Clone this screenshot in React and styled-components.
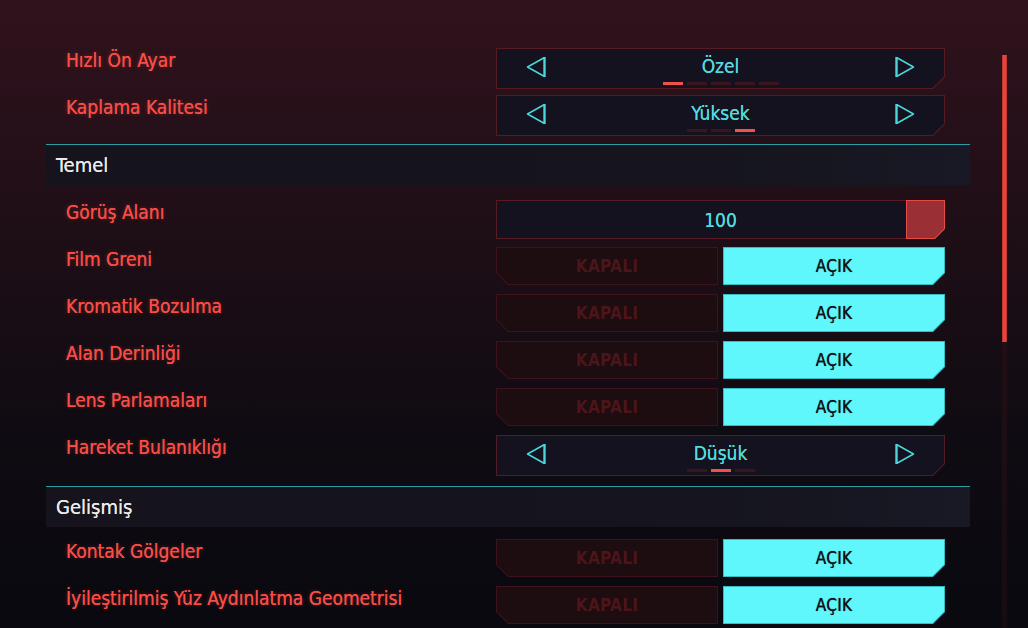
import React from 'react';
import styled, { createGlobalStyle } from 'styled-components';

const GlobalStyle = createGlobalStyle`
    html, body {
        margin: 0;
        padding: 0;
        height: 100%;
        overflow: hidden;
        background: #0a0a10;
    }
    * {
        box-sizing: border-box;
    }
`;

const FONT = `"DejaVu Sans Condensed", "Liberation Sans Narrow", "DejaVu Sans", sans-serif`;

const Page = styled.div`
    display: flex;
    align-items: flex-start;
    height: 628px;
    padding-top: 48px;
    font-family: ${FONT};
    background: linear-gradient(180deg, #30121c 0%, #1d0e16 40%, #0f0b12 70%, #09090f 100%);
`;

const Content = styled.div`
    width: 924px;
    margin-left: 46px;
    display: flex;
    flex-direction: column;
`;

const Row = styled.div`
    display: flex;
    align-items: flex-start;
    height: 41px;
    margin-bottom: 6px;
    padding: 0 25px 0 20px;
`;

const Label = styled.div`
    flex: 1;
    color: #f84c46;
    font-size: 19px;
    line-height: 24px;
    white-space: nowrap;
    text-shadow: 0 0 0.6px #f84c46, 0 0 4px rgba(248, 76, 70, 0.35);
`;

const Control = styled.div`
    width: 449px;
    height: 100%;
    position: relative;
`;

/* chamfered frame: outer paints the border, inner paints the fill */
const clip = (corner, size) =>
    corner === 'bl'
        ? `polygon(0 0, 100% 0, 100% 100%, ${size} 100%, 0 calc(100% - ${size}))`
        : `polygon(0 0, 100% 0, 100% calc(100% - ${size}), calc(100% - ${size}) 100%, 0 100%)`;

const Frame = styled.div`
    height: ${p => p.$h || '100%'};
    padding: 1px;
    background: ${p => p.$border};
    clip-path: ${p => clip(p.$corner, p.$cut || '12px')};
`;

const Face = styled.div`
    height: 100%;
    background: ${p => p.$fill};
    clip-path: ${p => clip(p.$corner, p.$innerCut || '11.5px')};
    display: flex;
    align-items: ${p => p.$align || 'center'};
    justify-content: center;
    position: relative;
`;

const Arrow = styled.svg`
    width: 20px;
    height: 22px;
    margin-top: 7px;
    flex: none;
`;

const Center = styled.div`
    flex: 1;
    display: flex;
    flex-direction: column;
    align-items: center;
    padding-top: 6px;
`;

const Value = styled.div`
    color: #52dade;
    font-size: 19px;
    line-height: 22px;
    text-shadow: 0 0 0.6px #52dade;
`;

const Dashes = styled.div`
    display: flex;
    gap: 4px;
    margin-top: 5px;
`;

const Dash = styled.div`
    width: 20px;
    height: 3px;
    background: ${p => (p.$on ? '#f0514b' : '#3a151c')};
`;

const SelectFace = styled(Face)`
    padding: 0 29px;
`;

const SliderText = styled.div`
    color: #52dade;
    font-size: 19px;
    line-height: 22px;
    text-shadow: 0 0 0.6px #52dade;
`;

const Thumb = styled.div`
    position: absolute;
    top: 0;
    right: 0;
    width: 39px;
    height: 39px;
    padding: 1px;
    background: #e44b45;
    clip-path: ${clip('br', '10px')};
    & > div {
        height: 100%;
        background: #9a3036;
        clip-path: ${clip('br', '9.5px')};
    }
`;

const ToggleGrid = styled.div`
    display: grid;
    grid-template-columns: 1fr 1fr;
    gap: 5px;
    height: 38px;
`;

const ToggleText = styled.div`
    font-size: 17px;
    font-weight: ${p => (p.$on ? 500 : 700)};
    color: ${p => (p.$on ? '#0f1218' : '#4b1519')};
    letter-spacing: 0.3px;
    text-shadow: ${p => (p.$on ? '0 0 0.7px #0f1218' : 'none')};
`;

const Divider = styled.div`
    height: 1px;
    background: #2c9ea3;
    margin-top: ${p => p.$top}px;
`;

const SectionHead = styled.div`
    height: 40px;
    background: linear-gradient(90deg, #16131d 0%, #15141f 70%, #181924 100%);
    color: #ecebea;
    font-size: 20px;
    line-height: 40px;
    padding-left: 10px;
    text-shadow: 0 0 0.6px #ecebea;
    margin-bottom: ${p => p.$bottom}px;
`;

const ScrollTrack = styled.div`
    margin-left: 32px;
    margin-top: 7px;
    width: 5px;
    height: 580px;
    background: linear-gradient(180deg, #2a1218 0%, #150c12 100%);
`;

const ScrollThumb = styled.div`
    height: 287px;
    background: #e8433c;
    box-shadow: inset 1px 0 0 #c2372f, inset -1px 0 0 #c2372f;
`;

function LeftArrow() {
    return (
        <Arrow viewBox="0 0 20 22">
            <path d="M18.5 1.5 L1.5 11 L18.5 20.5" fill="none" stroke="#4ad6db" strokeWidth="1.5" strokeLinejoin="round" />
            <path d="M18.5 1 V21" stroke="#4ad6db" strokeWidth="2.4" />
        </Arrow>
    );
}

function RightArrow() {
    return (
        <Arrow viewBox="0 0 20 22">
            <path d="M1.5 1.5 L18.5 11 L1.5 20.5" fill="none" stroke="#4ad6db" strokeWidth="1.5" strokeLinejoin="round" />
            <path d="M1.5 1 V21" stroke="#4ad6db" strokeWidth="2.4" />
        </Arrow>
    );
}

function Select({ label, value, count, active }) {
    return (
        <Row>
            <Label>{label}</Label>
            <Control>
                <Frame $border="#561a23" $corner="br">
                    <SelectFace $fill="#13121e" $corner="br" $align="flex-start">
                        <LeftArrow />
                        <Center>
                            <Value>{value}</Value>
                            <Dashes>
                                {Array.from({ length: count }).map((_, i) => (
                                    <Dash key={i} $on={i === active} />
                                ))}
                            </Dashes>
                        </Center>
                        <RightArrow />
                    </SelectFace>
                </Frame>
            </Control>
        </Row>
    );
}

function Slider({ label, value }) {
    return (
        <Row>
            <Label>{label}</Label>
            <Control>
                <Frame $border="#571b23" $corner="br" $h="39px">
                    <Face $fill="#13121e" $corner="br">
                        <SliderText>{value}</SliderText>
                    </Face>
                </Frame>
                <Thumb><div /></Thumb>
            </Control>
        </Row>
    );
}

function Toggle({ label, on }) {
    return (
        <Row>
            <Label>{label}</Label>
            <Control>
                <ToggleGrid>
                    <Frame $border="#3c131a" $corner="bl">
                        <Face $fill="#1d0c10" $corner="bl">
                            <ToggleText $on={false}>KAPALI</ToggleText>
                        </Face>
                    </Frame>
                    <Frame $border="#36bcc3" $corner="br">
                        <Face $fill={on ? '#5ff6fc' : '#13121e'} $corner="br">
                            <ToggleText $on={on}>AÇIK</ToggleText>
                        </Face>
                    </Frame>
                </ToggleGrid>
            </Control>
        </Row>
    );
}

export default function App() {
    return (
        <>
            <GlobalStyle />
            <Page>
                <Content>
                    <Select label="Hızlı Ön Ayar" value="Özel" count={5} active={0} />
                    <Select label="Kaplama Kalitesi" value="Yüksek" count={3} active={2} />

                    <Divider $top={2} />
                    <SectionHead $bottom={15}>Temel</SectionHead>
                    <Slider label="Görüş Alanı" value="100" />
                    <Toggle label="Film Greni" on />
                    <Toggle label="Kromatik Bozulma" on />
                    <Toggle label="Alan Derinliği" on />
                    <Toggle label="Lens Parlamaları" on />
                    <Select label="Hareket Bulanıklığı" value="Düşük" count={3} active={1} />

                    <Divider $top={4} />
                    <SectionHead $bottom={12}>Gelişmiş</SectionHead>
                    <Toggle label="Kontak Gölgeler" on />
                    <Toggle label="İyileştirilmiş Yüz Aydınlatma Geometrisi" on />
                </Content>
                <ScrollTrack>
                    <ScrollThumb />
                </ScrollTrack>
            </Page>
        </>
    );
}
